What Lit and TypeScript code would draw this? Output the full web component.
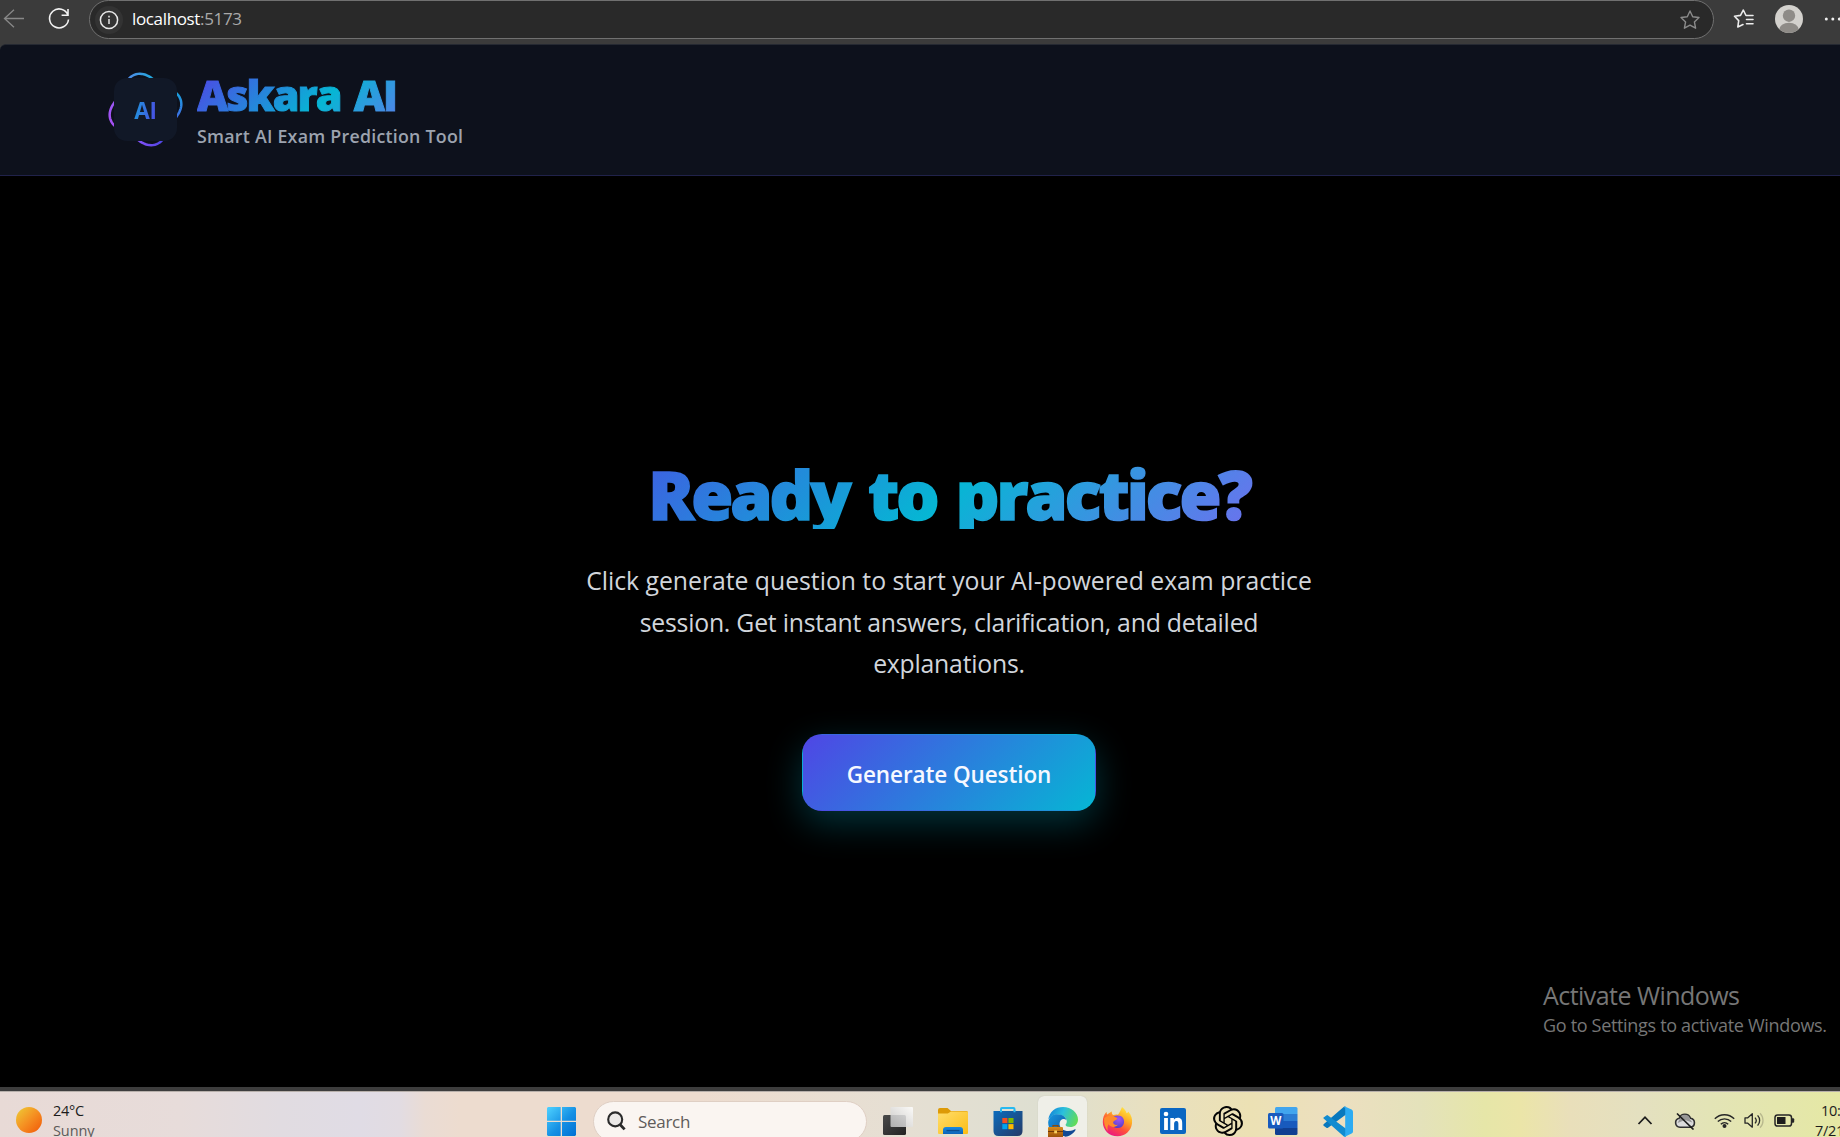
import { LitElement, html, css, svg } from "lit";
import { customElement } from "lit/decorators.js";

/* Four-lobed ring around the logo tile, drawn lobe by lobe. */
function lobe(centerDeg: number): string {
  const pts: string[] = [];
  for (let d = -45; d <= 45; d += 3) {
    const a = ((centerDeg + d) * Math.PI) / 180;
    const r = 32.9 + 3.6 * Math.cos((4 * d * Math.PI) / 180);
    pts.push(`${(37.5 + r * Math.cos(a)).toFixed(2)} ${(37.5 + r * Math.sin(a)).toFixed(2)}`);
  }
  return "M" + pts.join("L");
}

@customElement("browser-bar")
class BrowserBar extends LitElement {
  static styles = css`
    :host { display: block; }
    .bar {
      display: flex; align-items: flex-start; height: 44px; box-sizing: border-box;
      background: #3b3b3b; padding-left: 3px; overflow: hidden;
      font-family: "Open Sans", "Noto Sans", sans-serif;
    }
    svg { display: block; flex: none; }
    .back { margin: 8px 23px 0 0; }
    .reload { margin: 8px 19px 0 0; }
    .address {
      flex: none; display: flex; align-items: center; box-sizing: border-box;
      width: 1625px; height: 39px; border: 1px solid #707070; border-radius: 20px;
      background: #292929; padding: 0 13px 0 5px;
    }
    .site { width: 28px; height: 28px; border-radius: 50%; background: #333; display: grid; place-items: center; margin-right: 9px; }
    .url { flex: 1; font-size: 17px; line-height: 24px; color: #a9a9a9; letter-spacing: -0.35px; white-space: nowrap; padding-bottom: 2px; }
    .host { color: #fff; }
    .fav { margin: 8px 20px 0 19px; }
    .avatar { margin: 5px 20px 0 0; }
    .more { margin-top: 16px; }
  `;
  render() {
    const star = "M10 1 L12.7 6.7 L19 7.5 L14.4 11.9 L15.6 18.2 L10 15.1 L4.4 18.2 L5.6 11.9 L1 7.5 L7.3 6.7 Z";
    return html`
      <div class="bar">
        <svg class="back" width="22" height="21" fill="none" stroke="#888" stroke-width="1.3">
          <path d="M21 10.5H1.5M11 1.8L1.5 10.5L11 19.2" />
        </svg>
        <svg class="reload" width="22" height="22" fill="none" stroke="#f2f2f2" stroke-width="1.6">
          <path d="M20 7.2A9.5 9.5 0 1 0 20.5 11.5M20 1V7.2H13.6" />
        </svg>
        <div class="address">
          <span class="site">
            <svg width="20" height="20" fill="none" stroke="#e8e8e8" stroke-width="1.5">
              <circle cx="10" cy="10" r="8.6" /><path d="M10 9V14M10 5.8V7.4" />
            </svg>
          </span>
          <span class="url"><span class="host">localhost</span>:5173</span>
          <svg width="20" height="20" fill="none" stroke="#8b8b8b" stroke-width="1.4" stroke-linejoin="round"><path d=${star} /></svg>
        </div>
        <svg class="fav" width="22" height="22" fill="none" stroke="#ededed" stroke-width="1.6" stroke-linejoin="round" stroke-linecap="round">
          <path d="M20 7.5H13L10.3 2L7.5 7.4L1.5 8.3L5.7 12.6L4.8 19L10 16.6M13.5 11.5H20M13.5 15.7H20" />
        </svg>
        <svg class="avatar" width="28" height="28">
          <defs><clipPath id="face"><circle cx="14" cy="14" r="14" /></clipPath></defs>
          <g clip-path="url(#face)">
            <rect width="28" height="28" fill="#d3d1cd" />
            <circle cx="14" cy="10.7" r="6.2" fill="#8e8b87" />
            <ellipse cx="14" cy="25" rx="9.8" ry="7.3" fill="#8e8b87" />
          </g>
        </svg>
        <svg class="more" width="20" height="6" fill="#f0f0f0">
          <circle cx="3.3" cy="3" r="1.5" /><circle cx="9.8" cy="3" r="1.5" /><circle cx="16.3" cy="3" r="1.5" />
        </svg>
      </div>
    `;
  }
}

@customElement("site-header")
class SiteHeader extends LitElement {
  static styles = css`
    :host { display: block; }
    .header {
      display: flex; height: 132px; box-sizing: border-box; padding: 27px 0 0 108px;
      background: #0d111c; border-bottom: 1px solid #20224a; border-top: 1px solid #252932;
      border-top-left-radius: 6px;
      font-family: "Open Sans", "Noto Sans", sans-serif;
    }
    .logo { display: grid; width: 75px; height: 75px; flex: none; }
    .ring, .tile { grid-area: 1 / 1; }
    .tile {
      width: 63px; height: 63px; border-radius: 13px; background: #111827;
      place-self: center; display: grid; place-items: center;
    }
    .mark {
      font-size: 22.5px; line-height: 30px; font-weight: 700; letter-spacing: -0.3px;
      background: linear-gradient(100deg, #1b9bdb, #4f46e5); -webkit-background-clip: text;
      background-clip: text; color: transparent; padding-top: 2px;
    }
    .names { padding: 1px 0 0 14px; }
    .title {
      margin: 0; width: 266px; font-size: 43px; line-height: 44px; font-weight: 800;
      letter-spacing: -2px; word-spacing: 4px; white-space: nowrap; -webkit-text-stroke: 1px transparent;
      background: linear-gradient(135deg, #4f46e5, #06b6d4 50%, #8b5cf6);
      -webkit-background-clip: text; background-clip: text; color: transparent;
    }
    .sub { margin: 6px 0 0; font-size: 17.8px; line-height: 26px; font-weight: 600; color: #9ca3af; white-space: nowrap; letter-spacing: 0.25px; }
  `;
  render() {
    const sides = [
      { id: "top", deg: -105, from: "#4f8de8", to: "#22a7dc", dir: [0.2, 0, 0.8, 0] },
      { id: "right", deg: -14, from: "#18a0dc", to: "#3d6fe3", dir: [0, 0.2, 0, 0.8] },
      { id: "bottom", deg: 75, from: "#8250f6", to: "#4f46e5", dir: [0.2, 0, 0.8, 0] },
      { id: "left", deg: 166, from: "#9d58f6", to: "#a44ff2", dir: [0, 0.2, 0, 0.8] },
    ];
    return html`
      <header class="header">
        <div class="logo">
          <svg class="ring" width="75" height="75" fill="none" stroke-width="2.5">
            ${sides.map(
              (s) => svg`
                <linearGradient id=${s.id} x1=${s.dir[0]} y1=${s.dir[1]} x2=${s.dir[2]} y2=${s.dir[3]}>
                  <stop stop-color=${s.from} /><stop offset="1" stop-color=${s.to} />
                </linearGradient>
                <path d=${lobe(s.deg)} stroke="url(#${s.id})" />`
            )}
          </svg>
          <div class="tile"><span class="mark">AI</span></div>
        </div>
        <div class="names">
          <h1 class="title">Askara AI</h1>
          <p class="sub">Smart AI Exam Prediction Tool</p>
        </div>
      </header>
    `;
  }
}

@customElement("practice-hero")
class PracticeHero extends LitElement {
  static styles = css`
    :host { display: block; }
    .hero {
      display: flex; flex-direction: column; align-items: center; height: 911px;
      box-sizing: border-box; padding: 281px 0 0 58px; background: #000; overflow: hidden;
      font-family: "Open Sans", "Noto Sans", sans-serif; text-align: center;
    }
    .heading {
      margin: 0; width: 808px; font-size: 68px; line-height: 73px; height: 72px; font-weight: 800;
      letter-spacing: -3px; word-spacing: 4.5px; white-space: nowrap; -webkit-text-stroke: 1.6px transparent;
      background: linear-gradient(135deg, #4f46e5, #06b6d4 50%, #8b5cf6);
      -webkit-background-clip: text; background-clip: text; color: transparent;
    }
    .lead { margin: 31px 0 0; width: 780px; font-size: 24.8px; line-height: 41.5px; color: #d1d5db; letter-spacing: -0.03px; }
    .line { display: block; white-space: nowrap; }
    .tight { letter-spacing: -0.23px; }
    .generate {
      margin-top: 49px; width: 294px; height: 77px; box-sizing: border-box; flex: none;
      border: 1px solid transparent; border-radius: 20px; padding: 5px 0 0;
      background-image: linear-gradient(135deg, #4f46e5, #06b6d4);
      box-shadow: 0 12px 36px rgba(6, 182, 212, 0.28);
      color: #f6f8ff; font: 600 22.5px/30px "Open Sans", "Noto Sans", sans-serif; letter-spacing: -0.1px; white-space: nowrap;
    }
    .activate { align-self: flex-end; width: 297px; margin-top: 168px; text-align: left; color: #767676; white-space: nowrap; }
    .a1 { font-size: 25px; line-height: 32px; letter-spacing: -0.55px; }
    .a2 { padding-top: 1px; font-size: 18px; line-height: 26px; letter-spacing: -0.32px; }
  `;
  render() {
    return html`
      <main class="hero">
        <h2 class="heading">Ready to practice?</h2>
        <p class="lead">
          <span class="line">Click generate question to start your AI-powered exam practice</span>
          <span class="line tight">session. Get instant answers, clarification, and detailed</span>
          <span class="line tight">explanations.</span>
        </p>
        <button class="generate">Generate Question</button>
        <div class="activate">
          <div class="a1">Activate Windows</div>
          <div class="a2">Go to Settings to activate Windows.</div>
        </div>
      </main>
    `;
  }
}

@customElement("task-bar")
class TaskBar extends LitElement {
  static styles = css`
    :host { display: block; }
    .edge { height: 4px; background: #3d3d3d; }
    .bar {
      display: flex; height: 46px; box-sizing: border-box; overflow: hidden; border-top: 1px solid #b7b0ab;
      font-family: "Open Sans", "Noto Sans", sans-serif; white-space: nowrap;
      background: linear-gradient(90deg, #e8dad6 0, #e7dcda 180px, #e1dce1 280px, #e0dce5 360px, #e2dce2 400px, #eadcd4 425px, #eddccf 460px, #eddccf 700px, #e6dfd3 890px, #dedfd1 1040px, #e9e0be 1160px, #ece1b4 1250px, #ecdfc0 1340px, #e4e2bb 1420px, #e6e6a8 1485px, #ebe5a8 1520px, #e9dfba 1570px, #e4e0c0 1640px, #e3e4b6 1710px, #e5e8a4 1840px);
    }
    svg { display: block; flex: none; }
    .weather { display: flex; width: 531px; padding: 9px 0 0 16px; box-sizing: border-box; flex: none; }
    .sun { margin: 6px 11px 0 0; width: 26px; height: 26px; border-radius: 50%; background: linear-gradient(135deg, #efc233 10%, #f59022 50%, #f2620c 90%); flex: none; }
    .small { font-size: 14.5px; line-height: 20px; color: #1c1c1c; letter-spacing: -0.3px; }
    .dim { color: #5c5a59; letter-spacing: -0.1px; }
    .start { margin: 15px 17px 0 16px; }
    .search {
      flex: none; display: flex; align-items: center; box-sizing: border-box; width: 274px; height: 41px;
      margin: 9px 3px 0 0; padding-left: 13px; border: 1px solid #dfcfc4; border-radius: 21px; background: #faf5f1;
      font-size: 17px; color: #5f5c5a; letter-spacing: -0.3px;
    }
    .search svg { margin: -2px 12px 0 0; }
    .app { width: 55px; display: flex; justify-content: center; padding-top: 14px; flex: none; box-sizing: border-box; height: 46px; }
    .active { width: 49px; margin: 4px 3px 0; padding-top: 10px; background: #efefe8; border-radius: 6px; box-shadow: 0 0 1px #b8b8ad; }
    .tray { display: flex; margin-left: 272px; flex: none; }
    .chev { margin-top: 23px; }
    .cloud { margin: 20px 0 0 21px; }
    .wifi { margin: 20px 0 0 18px; }
    .sound { margin: 20px 0 0 9px; }
    .batt { margin: 22px 0 0 9px; }
    .clock { margin: 9px 0 0 20px; }
    .time { padding-left: 6px; }
  `;
  render() {
    return html`
      <div class="edge"></div>
      <div class="bar">
        <div class="weather">
          <span class="sun"></span>
          <div><div class="small">24°C</div><div class="small dim">Sunny</div></div>
        </div>
        <svg class="start" width="29" height="29">
          <defs><linearGradient id="win" x1="0" y1="0" x2="29" y2="29" gradientUnits="userSpaceOnUse"><stop stop-color="#4fd2ff" /><stop offset=".55" stop-color="#1590e4" /><stop offset="1" stop-color="#0070d4" /></linearGradient></defs>
          <path fill="url(#win)" d="M1 0H13.7V13.7H0V1ZM15 0H28L29 1V13.7H15ZM0 15H13.7V29H1L0 28ZM15 15H29V28L28 29H15Z" />
        </svg>
        <div class="search">
          <svg width="19" height="20" fill="none" stroke="#2b2b2b" stroke-width="2.1">
            <circle cx="8.2" cy="8.4" r="7" fill="#ece9e7" /><path d="M13 13.5L17.6 18.4" stroke-width="2.8" />
          </svg>
          Search
        </div>
        <div class="app">
          <svg width="32" height="31">
            <defs>
              <linearGradient id="dk" x1="0" y1="0" x2="1" y2="1"><stop stop-color="#4a4a4a" /><stop offset="1" stop-color="#222" /></linearGradient>
              <linearGradient id="lt" x1="0" y1="1" x2="1" y2="0"><stop stop-color="#c6c6c6" /><stop offset="1" stop-color="#fff" /></linearGradient>
            </defs>
            <rect x="1" y="9" width="23" height="20" rx="1.5" fill="url(#dk)" />
            <rect x="8.5" y="1" width="22.5" height="20" rx="1" fill="url(#lt)" opacity=".84" />
          </svg>
        </div>
        <div class="app">
          <svg width="30" height="30">
            <defs><linearGradient id="fo" x1="0" y1="0" x2="1" y2="1"><stop stop-color="#ffdd6c" /><stop offset="1" stop-color="#fbbd14" /></linearGradient>
            <linearGradient id="fb" x1="0" y1="0" x2="0" y2="1"><stop stop-color="#1a8be0" /><stop offset="1" stop-color="#0b63b8" /></linearGradient></defs>
            <path d="M0 4Q0 2 2 2H9.5L13 5H28.5Q30 5 30 7V10H0Z" fill="#dd9a07" />
            <path d="M0 7.5H9.8L13 5.6H29Q30 5.6 30 7V27Q30 28 29 28H1Q0 28 0 27Z" fill="url(#fo)" />
            <path d="M5 28V24Q5 21 8 21H22Q25 21 25 24V28Z" fill="url(#fb)" /><path d="M8.5 24.6H21.5" stroke="#0a4c8e" stroke-width="1.3" />
          </svg>
        </div>
        <div class="app">
          <svg width="30" height="31">
            <defs><linearGradient id="st" x1="0" y1="0" x2="1" y2="1"><stop stop-color="#0b6cbd" /><stop offset="1" stop-color="#253a66" /></linearGradient></defs>
            <path d="M8 6V3Q8 2 9 2H20.5Q21.5 2 21.5 3V6" fill="none" stroke="#27b9f0" stroke-width="2" />
            <path d="M.5 5H29.5V25Q29.5 30 24.5 30H5.5Q.5 30 .5 25Z" fill="url(#st)" />
            <path d="M8 4.5V6.3M21.5 4.5V6.3" stroke="#27b9f0" stroke-width="2" />
            <path d="M9.3 12H14.4V17.1H9.3Z" fill="#f25022" /><path d="M15.4 12H20.5V17.1H15.4Z" fill="#7fba00" />
            <path d="M9.3 18.1H14.4V23.2H9.3Z" fill="#00a4ef" /><path d="M15.4 18.1H20.5V23.2H15.4Z" fill="#ffb900" />
          </svg>
        </div>
        <div class="app active">
          <svg width="30" height="31">
            <defs>
              <linearGradient id="e1" x1="0" y1=".3" x2="1" y2=".6"><stop stop-color="#1485d8" /><stop offset=".45" stop-color="#2bc0dc" /><stop offset="1" stop-color="#62dc55" /></linearGradient>
              <linearGradient id="e2" x1="0" y1="0" x2="1" y2="1"><stop stop-color="#1897df" /><stop offset="1" stop-color="#0b4f9f" /></linearGradient>
              <linearGradient id="bag" x1="0" y1="0" x2="0" y2="1"><stop stop-color="#d98a1b" /><stop offset="1" stop-color="#9b5208" /></linearGradient>
            </defs>
            <path d="M.3 13.5C1.5 5.5 7.5 1 15 1C23.5 1 30 7 30 13.5C30 18.5 26.3 21 22.5 21C19.5 21 17.6 20 17.6 19C17.6 18 18.8 17.6 18.8 15.5C18.8 11.5 14.5 8.5 9.5 8.5C5.5 8.5 2.2 10.5.3 13.5Z" fill="url(#e1)" />
            <path d="M.2 16C.8 10.8 4.8 8.2 9.3 8.2C14.3 8.2 18 11 18.4 14C15.5 11.8 11.5 13.5 11.5 18.3C11.5 24 15.5 28 20 28.5C17.5 30.4 14 30.6 10.5 29.6C4 27.8-.2 22 .2 16Z" fill="url(#e2)" />
            <path d="M11.5 18C11.8 22.5 15.6 25 20.4 25C24.5 25 26.5 23 27.5 23.2C28.4 23.6 24.5 29.5 17.5 30.8C13 29 10.8 23 11.5 18Z" fill="#114a94" />
            <path d="M0 22Q0 21 1 21H14Q15 21 15 22V31H0Z" fill="url(#bag)" /><path d="M0 25.5H15" stroke="#6f3706" stroke-width="1" /><rect x="6.2" y="24.5" width="2.8" height="2.8" fill="#f8cf5e" />
            <path d="M5 21V19.6H10V21" fill="none" stroke="#8b4a09" stroke-width="1.2" />
          </svg>
        </div>
        <div class="app">
          <svg width="31" height="31">
            <defs>
              <linearGradient id="f1" x1=".85" y1="0" x2=".25" y2="1"><stop stop-color="#fff04a" /><stop offset=".35" stop-color="#ffac22" /><stop offset=".65" stop-color="#ff4f3a" /><stop offset="1" stop-color="#e9128a" /></linearGradient>
              <radialGradient id="f2" cx=".6" cy=".3" r=".8"><stop stop-color="#a255f5" /><stop offset="1" stop-color="#4a3bc0" /></radialGradient>
            </defs>
            <path d="M20 1C22.5 3 24 5 24.6 7.2C25.8 7 26.2 6.3 26.2 5.6C29.5 9.3 30.5 13 30 17.5C29 25 23 30.3 15.6 30.3C7 30.3.8 24 .8 16C.8 12 2 8.5 4.5 5.8C4.5 7 4.8 8 5.4 8.6C7 6.8 8.4 6 10 5.4C9.5 6.8 10 8.3 11.3 9C13 8.4 14.6 8.3 16 8.7C17.5 6.5 18.8 4 20 1Z" fill="url(#f1)" />
            <path d="M10 12C12 9 18.5 8.4 21 12C23.4 15.5 21.8 22 15.8 22C11 22 8.4 18.6 9 14.7Z" fill="url(#f2)" />
            <path d="M2.2 12C5 9.8 8.5 9.5 11.3 10.2C13 10.8 14.4 11.3 15.5 12.6C14.6 14.6 12 14.2 11.2 16C10.7 17.8 13 19.4 15.8 18.8C13.5 21.8 8.7 21.6 6.6 18.2C5 21 5.2 23.7 6.4 26C3 22 1.5 17 2.2 12Z" fill="#ff8b2a" />
          </svg>
        </div>
        <div class="app">
          <svg width="26" height="30">
            <rect y="2" width="26" height="26" rx="2" fill="#0a66c2" />
            <circle cx="6" cy="8" r="2.3" fill="#fff" />
            <path d="M4.1 12H7.9V24H4.1ZM10.3 12H13.9V13.7C14.6 12.5 16 11.7 17.8 11.7C21.3 11.7 22.2 14 22.2 17.2V24H18.4V18C18.4 16.4 18.2 14.9 16.4 14.9C14.6 14.9 14.1 16.3 14.1 18V24H10.3Z" fill="#fff" />
          </svg>
        </div>
        <div class="app">
          <svg width="30" height="30" viewBox="0 0 24 24">
            <path fill="#050505" d="M22.2819 9.8211a5.9847 5.9847 0 0 0-.5157-4.9108 6.0462 6.0462 0 0 0-6.5098-2.9A6.0651 6.0651 0 0 0 4.9807 4.1818a5.9847 5.9847 0 0 0-3.9977 2.9 6.0462 6.0462 0 0 0 .7427 7.0966 5.98 5.98 0 0 0 .511 4.9107 6.051 6.051 0 0 0 6.5146 2.9001A5.9847 5.9847 0 0 0 13.2599 24a6.0557 6.0557 0 0 0 5.7718-4.2058 5.9894 5.9894 0 0 0 3.9977-2.9001 6.0557 6.0557 0 0 0-.7475-7.0729zm-9.022 12.6081a4.4755 4.4755 0 0 1-2.8764-1.0408l.1419-.0804 4.7783-2.7582a.7948.7948 0 0 0 .3927-.6813v-6.7369l2.02 1.1686a.071.071 0 0 1 .038.052v5.5826a4.504 4.504 0 0 1-4.4945 4.4944zm-9.6607-4.1254a4.4708 4.4708 0 0 1-.5346-3.0137l.142.0852 4.783 2.7582a.7712.7712 0 0 0 .7806 0l5.8428-3.3685v2.3324a.0804.0804 0 0 1-.0332.0615L9.74 19.9502a4.4992 4.4992 0 0 1-6.1408-1.6464zM2.3408 7.8956a4.485 4.485 0 0 1 2.3655-1.9728V11.6a.7664.7664 0 0 0 .3879.6765l5.8144 3.3543-2.0201 1.1685a.0757.0757 0 0 1-.071 0l-4.8303-2.7865A4.504 4.504 0 0 1 2.3408 7.872zm16.5963 3.8558L13.1038 8.364 15.1192 7.2a.0757.0757 0 0 1 .071 0l4.8303 2.7913a4.4944 4.4944 0 0 1-.6765 8.1042v-5.6772a.79.79 0 0 0-.407-.667zm2.0107-3.0231l-.142-.0852-4.7735-2.7818a.7759.7759 0 0 0-.7854 0L9.409 9.2297V6.8974a.0662.0662 0 0 1 .0284-.0615l4.8303-2.7866a4.4992 4.4992 0 0 1 6.6802 4.66zM8.3065 12.863l-2.02-1.1638a.0804.0804 0 0 1-.038-.0567V6.0742a4.4992 4.4992 0 0 1 7.3757-3.4537l-.142.0805L8.704 5.459a.7948.7948 0 0 0-.3927.6813zm1.0976-2.3654l2.602-1.4998 2.6069 1.4998v2.9994l-2.5974 1.4997-2.6067-1.4997Z" />
          </svg>
        </div>
        <div class="app">
          <svg width="30" height="30">
            <path d="M7 2.5Q7 1 8.5 1H28Q29.5 1 29.5 2.5V8H7Z" fill="#41a5ee" /><path d="M7 8H29.5V15H7Z" fill="#2b7cd3" /><path d="M7 15H29.5V22H7Z" fill="#185abd" />
            <path d="M7 22H29.5V27.5Q29.5 29 28 29H8.5Q7 29 7 27.5Z" fill="#103f91" />
            <rect x="0" y="7" width="15.5" height="15.5" rx="1.5" fill="#185abd" />
            <text x="7.75" y="19" text-anchor="middle" font-family="Open Sans, sans-serif" font-weight="700" font-size="11.5" fill="#fff">W</text>
          </svg>
        </div>
        <div class="app">
          <svg width="30" height="31">
            <path d="M3.4 21.8L.6 19.8Q0 19 .6 18.3L20.6 1Q22 .3 23 .9V8.4L5 21.8Q4.2 22.4 3.4 21.8Z" fill="#0878bd" />
            <path d="M3.4 9.4Q4.2 8.8 5 9.4L23 22.8V30.4Q21.8 31 20.6 30.2L.6 12.6Q0 12 .6 11.4Z" fill="#118bd0" />
            <path d="M22.4.7L28.6 3.6Q30 4.3 30 5.8V25.4Q30 26.9 28.6 27.6L22.4 30.6Q21.2 31 20.6 30.3Q22 30 22.2 28.6V2.8Q22.1 1.4 20.6.9Q21.2.3 22.4.7Z" fill="#2cabf2" />
          </svg>
        </div>
        <div class="tray">
          <svg class="chev" width="16" height="11" fill="none" stroke="#1c1c1c" stroke-width="1.8"><path d="M1.5 9L8 2.2L14.5 9" /></svg>
          <svg class="cloud" width="22" height="18">
            <path d="M6 15.3A4.6 4.6 0 0 1 5.3 6.2A6 6 0 0 1 16.5 6.2A4.6 4.6 0 0 1 16.5 15.3Z" fill="#dcdcdc" stroke="#303030" stroke-width="1.6" />
            <path d="M5.6 7A5.2 5.2 0 0 1 15.8 7L18.4 10.6L11 8L3.6 11Z" fill="#979797" />
            <path d="M3 1.5L19.5 17.5" stroke="#1c1c1c" stroke-width="1.7" />
          </svg>
          <svg class="wifi" width="21" height="17" fill="none" stroke="#262626" stroke-width="1.4">
            <path d="M.8 6.8A13.6 13.6 0 0 1 20.2 6.8M3.8 9.6A9.5 9.5 0 0 1 17.2 9.6M6.8 12.2A5.4 5.4 0 0 1 14.2 12.2" /><circle cx="10.5" cy="14" r="2" fill="#262626" stroke="none" />
          </svg>
          <svg class="sound" width="21" height="17" fill="none" stroke="#262626" stroke-width="1.3" stroke-linejoin="round">
            <path d="M1 5.8H3.8L8.3 1.8V15.2L3.8 11.2H1Z" /><path d="M11 5.6A4.4 4.4 0 0 1 11 11.4M13.6 3.4A7.4 7.4 0 0 1 13.6 13.6" /><path d="M16 1.2A10.4 10.4 0 0 1 16 15.8" stroke="#b9b98e" />
          </svg>
          <svg class="batt" width="21" height="14">
            <rect x="1" y="1" width="16.5" height="11" rx="2.6" fill="none" stroke="#262626" stroke-width="1.5" /><rect x="3" y="3" width="8.5" height="7" fill="#1c1c1c" /><path d="M18 4.3H19.2Q20.2 4.3 20.2 5.3V7.7Q20.2 8.7 19.2 8.7H18Z" fill="#262626" />
          </svg>
          <div class="clock"><div class="small time">10:</div><div class="small">7/21</div></div>
        </div>
      </div>
    `;
  }
}

@customElement("app-root")
class AppRoot extends LitElement {
  static styles = css`
    :host { display: block; }
    .screen { display: flex; flex-direction: column; width: 1840px; height: 1137px; overflow: hidden; background: #3b3b3b; }
  `;
  render() {
    return html`
      <div class="screen">
        <browser-bar></browser-bar>
        <site-header></site-header>
        <practice-hero></practice-hero>
        <task-bar></task-bar>
      </div>
    `;
  }
}
